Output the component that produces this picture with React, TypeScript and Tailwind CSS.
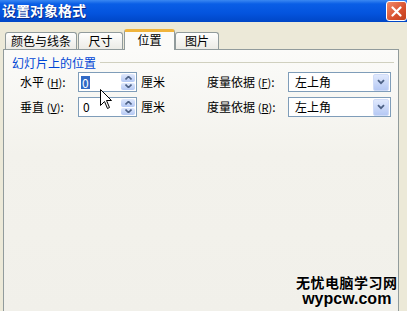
import React from "react";

const cjk = { fontFamily: '"Noto Sans CJK SC", "Liberation Sans", sans-serif' };

function Mn({ k }: { k: string }) {
  return (
    <span className="text-[11px]">
      (<span className="underline">{k}</span>)
    </span>
  );
}

function Spinner() {
  return (
    <div className="flex flex-col w-[15px] h-full border-l border-[#fff] gap-px">
      <div className="flex-1 bg-[linear-gradient(180deg,#dfe8fc,#b4c8f4)] rounded-[2px] flex items-center justify-center">
        <svg width="7" height="4" viewBox="0 0 7 4"><path d="M0.5 3.5 L3.5 0.5 L6.5 3.5" fill="none" stroke="#4d6185" strokeWidth="1.6" /></svg>
      </div>
      <div className="flex-1 bg-[linear-gradient(180deg,#dfe8fc,#b4c8f4)] rounded-[2px] flex items-center justify-center">
        <svg width="7" height="4" viewBox="0 0 7 4"><path d="M0.5 0.5 L3.5 3.5 L6.5 0.5" fill="none" stroke="#4d6185" strokeWidth="1.6" /></svg>
      </div>
    </div>
  );
}

function Select({ value }: { value: string }) {
  return (
    <div className="w-[103px] h-[20px] border border-[#7f9db9] bg-white flex items-center">
      <span className="flex-1 pl-[6px] text-[12px] leading-none text-black">{value}</span>
      <div className="w-[16px] h-[17px] mr-px rounded-[2px] bg-[linear-gradient(180deg,#e0e9fd,#b6c9f4)] border border-[#d0dcf8] flex items-center justify-center">
        <svg width="8" height="6" viewBox="0 0 8 6"><path d="M1 1.2 L4 4.2 L7 1.2" fill="none" stroke="#4d6185" strokeWidth="1.8" /></svg>
      </div>
    </div>
  );
}

function Row({ label, k, sel, label2, k2 }: { label: string; k: string; sel: boolean; label2: string; k2: string }) {
  return (
    <div className="flex items-center h-[20px] text-[12px] text-black">
      <div className="w-[58px] leading-none whitespace-nowrap">
        {label} <Mn k={k} />:
      </div>
      <div className="w-[59px] h-[20px] border border-[#7f9db9] bg-white flex items-stretch p-px">
        <div className="flex-1 flex items-center pl-[1px]">
          {sel ? (
            <span className="bg-[#316ac5] text-white text-[12px] leading-[13px] px-px">0</span>
          ) : (
            <span className="text-[12px] leading-none pl-[2px]">0</span>
          )}
        </div>
        <Spinner />
      </div>
      <div className="w-[70px] pl-[4px] leading-none">厘米</div>
      <div className="w-[81px] leading-none whitespace-nowrap">
        {label2} <Mn k={k2} />:
      </div>
      <Select value="左上角" />
    </div>
  );
}

export default function App() {
  return (
    <div className="w-[407px] h-[311px] bg-[#ece9d8] flex flex-col overflow-hidden relative" style={cjk}>
      <div className="h-[22px] flex items-start justify-between bg-[linear-gradient(180deg,#3a88f2_0%,#0a5ee6_18%,#0454de_60%,#0046c6_100%)]">
        <div className="pl-[2px] pt-[2px] text-white font-bold text-[14px] leading-[17px] [text-shadow:1px_1px_0_#0a2a8a]">设置对象格式</div>
        <div className="w-[21px] h-[20px] mt-[1px] rounded-[3px] border border-white bg-[linear-gradient(135deg,#f08a6a,#d8502e_60%,#c0401e)] flex items-center justify-center">
          <svg width="11" height="11" viewBox="0 0 11 11"><path d="M1.5 1.5 L9.5 9.5 M9.5 1.5 L1.5 9.5" stroke="white" strokeWidth="2.2" strokeLinecap="round" /></svg>
        </div>
      </div>
      <div className="flex items-end h-[27px] pl-[5px] text-[12px] text-black">
        <div className="w-[72px] h-[17px] mr-[1px] border border-b-0 border-[#919b9c] rounded-t-[3px] bg-[linear-gradient(180deg,#fefefe,#ecebe6)] flex items-center justify-center leading-none">颜色与线条</div>
        <div className="w-[45px] h-[17px] mr-[1px] border border-b-0 border-[#919b9c] rounded-t-[3px] bg-[linear-gradient(180deg,#fefefe,#ecebe6)] flex items-center justify-center leading-none">尺寸</div>
        <div className="w-[51px] h-[21px] mb-[-1px] relative z-10 border border-b-0 border-[#919b9c] border-t-[3px] border-t-[#f0b43c] rounded-t-[3px] bg-[#fbfbf9] flex items-center justify-center leading-none pb-[2px]">位置</div>
        <div className="w-[44px] h-[17px] border border-b-0 border-[#919b9c] rounded-t-[3px] bg-[linear-gradient(180deg,#fefefe,#ecebe6)] flex items-center justify-center leading-none">图片</div>
      </div>
      <div className="flex-1 ml-[3px] mr-[8px] border border-b-0 border-[#919b9c] bg-[linear-gradient(180deg,#fbfbf9,#f3f2ec_40%,#f1f0ea)] pl-[8px] pr-[4px]">
        <div className="flex items-center mt-[6px] h-[13px]">
          <span className="text-[12px] leading-none text-[#0046d5]">幻灯片上的位置</span>
          <div className="flex-1 ml-[4px] h-0 border-t border-[#d0d0bf]" />
        </div>
        <div className="pl-[8px] mt-[3px] flex flex-col gap-[5px]">
          <Row label="水平" k="H" sel label2="度量依据" k2="F" />
          <Row label="垂直" k="V" sel={false} label2="度量依据" k2="R" />
        </div>
      </div>
      <svg className="absolute left-[100px] top-[89px]" width="13" height="21" viewBox="0 0 13 21">
        <path d="M0.5 0.5 L0.5 16.5 L4.5 12.5 L7.5 19.5 L9.5 18.5 L6.5 11.5 L11.5 11.5 Z" fill="white" stroke="black" strokeWidth="1" strokeLinejoin="miter" />
      </svg>
      <div className="absolute left-[296px] top-[274px] flex flex-col items-center text-black">
        <div className="text-[14px] font-bold leading-[16px] tracking-[0.5px] [text-shadow:0_0_2px_white]">无忧电脑学习网</div>
        <div className="text-[16px] font-bold leading-[17px] [text-shadow:0_0_2px_white]" style={{ fontFamily: '"Liberation Sans", Arial, sans-serif' }}>wypcw.com</div>
      </div>
    </div>
  );
}
